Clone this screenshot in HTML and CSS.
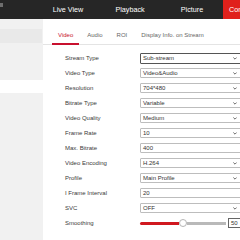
FILE: index.html
```html
<!DOCTYPE html>
<html lang="en">
<head>
    <meta charset="UTF-8">
    <title>Video Settings</title>
    <link rel="stylesheet" href="styles.css">
</head>
<body>
  <div class="topbar">
    <div class="logo"><span></span></div>
    <div class="nav-item">Live View</div>
    <div class="nav-item">Playback</div>
    <div class="nav-item">Picture</div>
    <div class="nav-item active">Configuration</div>
  </div>
  <div class="page">
    <div class="sidebar">
      <div class="side-group"></div>
      <div class="side-item"></div>
    </div>
    <div class="main">
      <div class="tabs">
        <div class="tab active">Video</div>
        <div class="tab">Audio</div>
        <div class="tab">ROI</div>
        <div class="tab">Display Info. on Stream</div>
      </div>
      <div class="form">
        <div class="row"><div class="label">Stream Type</div><div class="select focus"><span>Sub-stream</span><svg viewBox="0 0 6 4"><path d="M0.5 0.5 L3 3 L5.5 0.5" /></svg></div></div>
        <div class="row"><div class="label">Video Type</div><div class="select"><span>Video&amp;Audio</span><svg viewBox="0 0 6 4"><path d="M0.5 0.5 L3 3 L5.5 0.5" /></svg></div></div>
        <div class="row"><div class="label">Resolution</div><div class="select"><span>704*480</span><svg viewBox="0 0 6 4"><path d="M0.5 0.5 L3 3 L5.5 0.5" /></svg></div></div>
        <div class="row"><div class="label">Bitrate Type</div><div class="select"><span>Variable</span><svg viewBox="0 0 6 4"><path d="M0.5 0.5 L3 3 L5.5 0.5" /></svg></div></div>
        <div class="row"><div class="label">Video Quality</div><div class="select"><span>Medium</span><svg viewBox="0 0 6 4"><path d="M0.5 0.5 L3 3 L5.5 0.5" /></svg></div></div>
        <div class="row"><div class="label">Frame Rate</div><div class="select"><span>10</span><svg viewBox="0 0 6 4"><path d="M0.5 0.5 L3 3 L5.5 0.5" /></svg></div></div>
        <div class="row"><div class="label">Max. Bitrate</div><div class="select input"><span>400</span></div></div>
        <div class="row"><div class="label">Video Encoding</div><div class="select"><span>H.264</span><svg viewBox="0 0 6 4"><path d="M0.5 0.5 L3 3 L5.5 0.5" /></svg></div></div>
        <div class="row"><div class="label">Profile</div><div class="select"><span>Main Profile</span><svg viewBox="0 0 6 4"><path d="M0.5 0.5 L3 3 L5.5 0.5" /></svg></div></div>
        <div class="row"><div class="label">I Frame Interval</div><div class="select input"><span>20</span></div></div>
        <div class="row"><div class="label">SVC</div><div class="select"><span>OFF</span><svg viewBox="0 0 6 4"><path d="M0.5 0.5 L3 3 L5.5 0.5" /></svg></div></div>
        <div class="row">
          <div class="label">Smoothing</div>
          <div class="slider">
            <div class="track">
              <div class="fill"></div>
              <div class="thumb"></div>
              <div class="rest"></div>
            </div>
            <div class="value">50</div>
          </div>
        </div>
      </div>
    </div>
  </div>
</body>
</html>
```

FILE: styles.css
```css
* {
  box-sizing: border-box;
  font-family: "Liberation Sans", Arial, Helvetica, sans-serif;
}

html, body {
  margin: 0;
  width: 240px;
  height: 240px;
  overflow: hidden;
  background-color: #fff;
}

.topbar {
  height: 19px;
  background-color: #262626;
  display: flex;
  align-items: stretch;
  white-space: nowrap;
}

.logo {
  width: 37px;
  flex-shrink: 0;
  padding-top: 3px;
}

.logo span {
  display: block;
  width: 3px;
  height: 4px;
  background-color: #6e6e6e;
}

.nav-item {
  width: 62px;
  flex-shrink: 0;
  color: #fff;
  font-size: 7.2px;
  line-height: 19px;
  text-align: center;
}

.nav-item.active {
  width: auto;
  padding: 0 6px;
  background-color: #e0201b;
}

.page {
  display: flex;
  height: 221px;
}

.sidebar {
  width: 43px;
  flex-shrink: 0;
  background-color: #f1f1f1;
  padding-top: 10px;
}

.side-group {
  height: 14px;
  margin-right: 1px;
  background-color: #e9e9e9;
}

.side-item {
  height: 13px;
  margin-top: 37px;
  background-color: #fff;
}

.main {
  flex: 1;
  min-width: 0;
}

.tabs {
  display: flex;
  align-items: flex-end;
  height: 26px;
  padding-left: 9px;
  border-bottom: 1px solid #e4e4e4;
  white-space: nowrap;
}

.tab {
  font-size: 6px;
  line-height: 10px;
  color: #666;
  padding: 0 6px 4px;
  margin-right: 2px;
}

.tab.active {
  color: #c8102e;
  border-bottom: 2px solid #c8102e;
  padding-bottom: 3px;
  margin-bottom: -1px;
}

.form {
  padding: 8px 0 0 22px;
}

.row {
  display: flex;
  align-items: center;
  height: 15px;
  padding-bottom: 5px;
}

.label {
  width: 75px;
  flex-shrink: 0;
  font-size: 6px;
  color: #3a3a3a;
  white-space: nowrap;
}

.select {
  width: 101px;
  flex-shrink: 0;
  height: 10px;
  border: 1px solid #bdbdbd;
  border-radius: 1px;
  display: flex;
  align-items: center;
  justify-content: space-between;
  padding: 0 3px 0 2px;
  font-size: 6px;
  color: #333;
}

.select.focus {
  border-color: #555;
  height: 11px;
}

.select svg {
  width: 4px;
  height: 3px;
  fill: none;
  stroke: #444;
  stroke-width: 1.2;
}

.slider {
  display: flex;
  align-items: center;
  width: 101px;
  flex-shrink: 0;
}

.track {
  display: flex;
  align-items: center;
  width: 86px;
  flex-shrink: 0;
}

.fill {
  width: 39px;
  height: 3px;
  background-color: #d0181f;
  border-radius: 2px 0 0 2px;
}

.thumb {
  width: 8px;
  height: 8px;
  border-radius: 50%;
  border: 1px solid #b5b5b5;
  background-color: #fff;
}

.rest {
  flex: 1;
  height: 3px;
  background-color: #b9b9b9;
}

.value {
  margin-left: 2px;
  width: 14px;
  flex-shrink: 0;
  height: 10px;
  border: 1px solid #666;
  font-size: 6px;
  color: #333;
  padding-left: 2px;
  line-height: 8px;
}
```
